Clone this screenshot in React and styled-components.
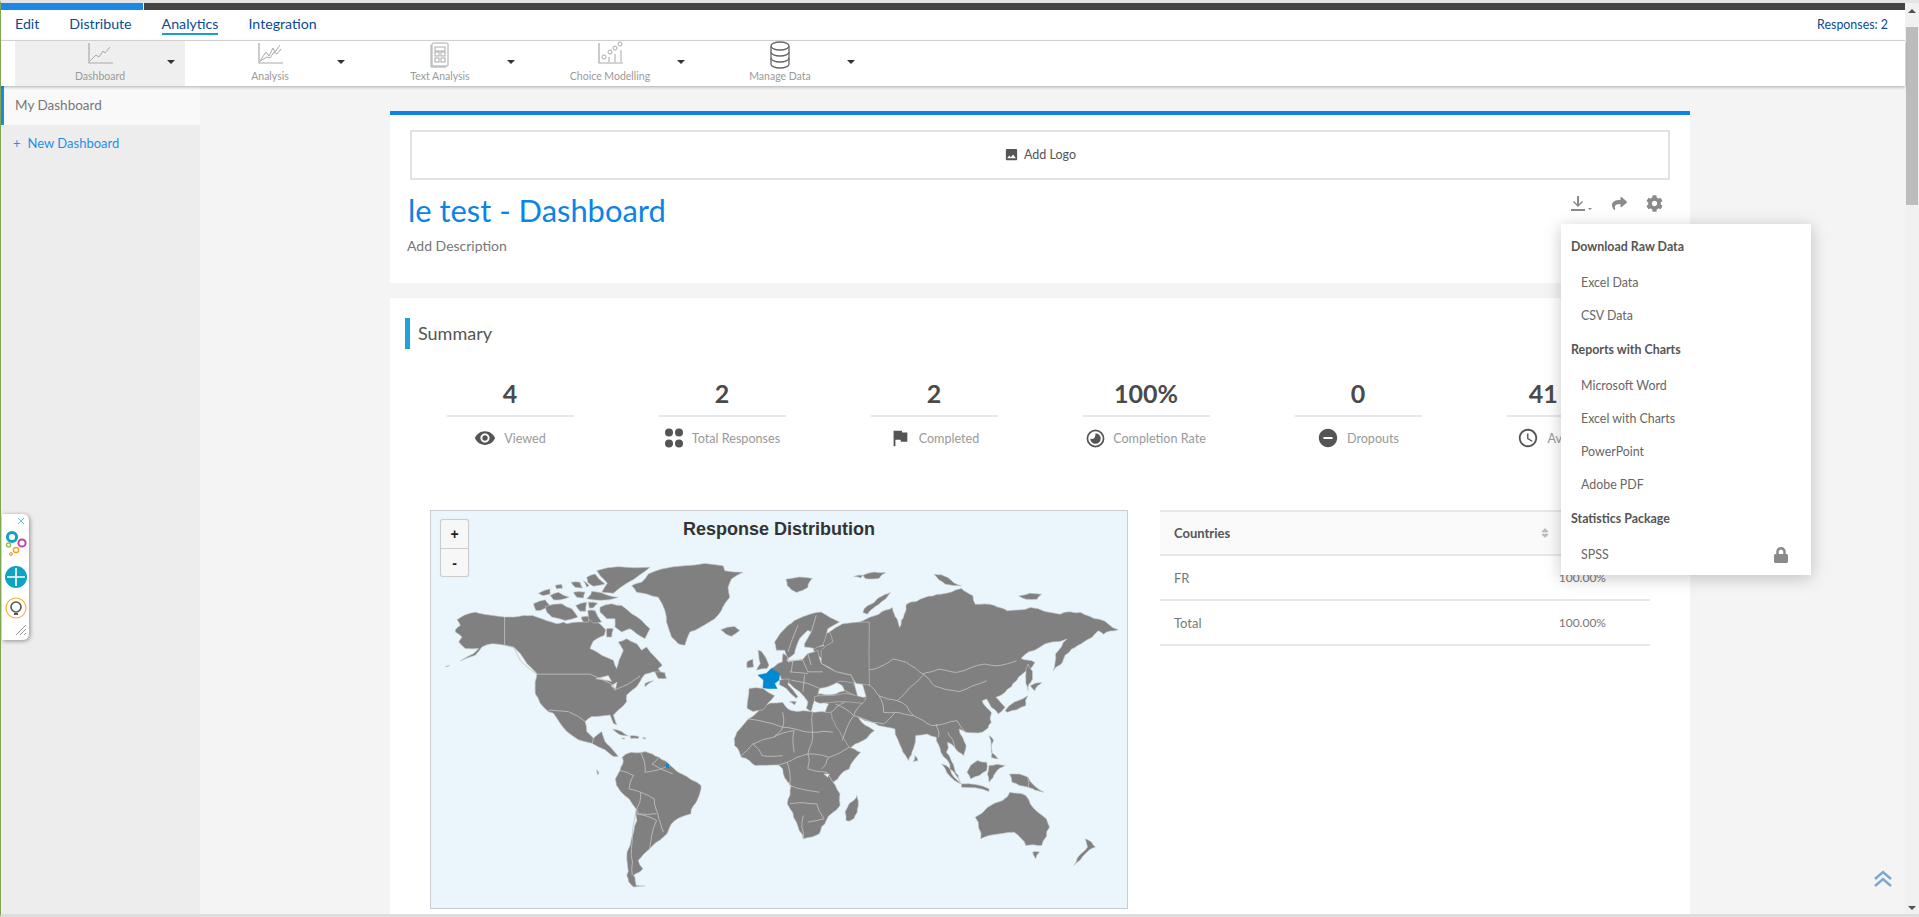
import React from "react";
import styled, { createGlobalStyle } from "styled-components";
import { FaCog, FaShare, FaLock, FaSort } from "react-icons/fa";
import { MdRemoveRedEye, MdFlag, MdRemoveCircle, MdAccessTime, MdImage } from "react-icons/md";

const FONT = `"Lato", "Roboto", "Liberation Sans", sans-serif`;

const Global = createGlobalStyle`
  html, body { margin: 0; padding: 0; height: 100%; overflow: hidden; background: #f4f4f4; }
  body { font-family: ${FONT}; }
  * { box-sizing: border-box; }
`;

const Page = styled.div`
  position: relative; height: 917px; width: 1919px; display: flex; overflow: hidden;
  border-left: 1px solid #7fa653; border-bottom: 3px solid #dedede; border-top: 3px solid #e4e4e4;
`;
const Viewport = styled.div`flex: 1; min-width: 0; display: flex; flex-direction: column;`;
const Scrollbar = styled.div`
  width: 14px; background: #f1f1f1; display: flex; flex-direction: column; align-items: center; flex: none;
`;
const ScrollUp = styled.div`
  margin-top: 6px; width: 0; height: 0; border-left: 4px solid transparent; border-right: 4px solid transparent;
  border-bottom: 4px solid #505050;
`;
const ScrollThumb = styled.div`margin-top: 14px; width: 12px; height: 178px; background: #bcbcbc;`;
const ScrollDown = styled.div`
  margin-top: auto; margin-bottom: 4px; width: 0; height: 0; border-left: 4px solid transparent;
  border-right: 4px solid transparent; border-top: 4px solid #505050;
`;
const ProgressTrack = styled.div`height: 7px; background: #444; flex: none;`;
const ProgressFill = styled.div`height: 100%; width: 143px; background: #1b88e6; border-right: 1px solid #fff;`;

const Nav = styled.nav`
  height: 31px; flex: none; background: #fff; border-bottom: 1px solid #dcdcdc;
  display: flex; align-items: center; padding: 0 17px 1px 14px;
`;
const NavLink = styled.a`
  font-size: 14.2px; color: #0b4a92; margin-right: 30px; line-height: 18px;
  border-bottom: ${(p) => (p.$active ? "2px solid #1a9ad6" : "2px solid transparent")};
`;
const Responses = styled.span`margin-left: auto; font-size: 12.4px; color: #0b4a92;`;

const Toolbar = styled.div`
  height: 45px; flex: none; background: #fff; display: flex; padding-left: 14px;
  box-shadow: 0 1px 3px rgba(0,0,0,.3); position: relative; z-index: 2;
`;
const Tool = styled.div`
  width: 170px; display: grid; background: ${(p) => (p.$active ? "#efefef" : "#fff")};
`;
const ToolBody = styled.div`
  grid-area: 1 / 1; display: flex; flex-direction: column; align-items: center; justify-content: flex-end;
  padding-bottom: 3px; color: #9a9a9a; font-size: 10.5px; line-height: 13px;
`;
const ToolIcon = styled.svg`width: 40px; height: 28px; margin-bottom: 1px; fill: none; stroke: #a9a9a9; stroke-width: 1;`;
const Caret = styled.span`
  grid-area: 1 / 1; justify-self: end; align-self: start; margin: 19px 10px 0 0; width: 0; height: 0;
  border-left: 4px solid transparent; border-right: 4px solid transparent; border-top: 4px solid #333;
`;

const Body = styled.div`flex: 1; display: flex; min-height: 0;`;
const Sidebar = styled.aside`width: 199px; flex: none; background: #ededed;`;
const SideItem = styled.div`
  height: 39px; display: flex; align-items: center; padding: 0 0 2px 11px; background: #f9f9f9;
  border-left: 3px solid #1b88e6; color: #777; font-size: 13.5px;
`;
const SideAdd = styled.div`
  height: 36px; display: flex; align-items: center; padding-left: 12px; gap: 7px; color: #1f8fe8; font-size: 13px;
`;
const Main = styled.main`flex: 1; min-width: 0; padding: 25px 0 0 190px; background: #f4f4f4; overflow: hidden;`;
const HeadCard = styled.section`
  position: relative; width: 1300px; height: 172px; background: #fff; border-top: 4px solid #0b84e6; padding: 15px 20px 0;
`;
const LogoBox = styled.div`
  height: 50px; border: 2px solid #e2e2e2; display: flex; align-items: center; justify-content: center; gap: 5px;
  padding-bottom: 2px; font-size: 12.5px; color: #555;
`;
const TitleRow = styled.div`display: flex; justify-content: space-between; align-items: flex-start; margin-left: -2px;`;
const Title = styled.h1`margin: 13px 0 0; font-size: 30.9px; font-weight: 400; line-height: 36px; color: #0b84e6;`;
const Desc = styled.p`margin: 8px 0 0 -1px; font-size: 14px; line-height: 18px; color: #777;`;
const Actions = styled.div`
  display: flex; align-items: center; gap: 19px; margin: 15px 7px 0 0; color: #8a8a8a;
`;
const DownIcon = styled.svg`width: 22px; height: 16px; fill: #8a8a8a;`;

const Menu = styled.div`
  position: absolute; top: 109px; left: 1171px; width: 250px; height: 351px; background: #fff; z-index: 5;
  padding: 5px 0; box-shadow: 0 3px 16px rgba(0,0,0,.22);
`;
const MenuHead = styled.div`
  height: 34px; margin-bottom: 3px; padding-left: 10px; display: flex; align-items: center;
  font-size: 12.4px; font-weight: 700; color: #555;
`;
const MenuItem = styled.div`
  height: 33px; padding: 0 22px 0 20px; display: flex; align-items: center; justify-content: space-between;
  font-size: 12.4px; color: #666;
`;

const Card = styled.section`
  width: 1300px; height: 640px; margin-top: 15px; background: #fff; padding: 20px 0 0 15px;
`;
const Heading = styled.h2`
  margin: 0; height: 31px; border-left: 5px solid #1fa1dc; padding: 0 0 2px 8px; font-size: 18px; font-weight: 400;
  color: #555; display: flex; align-items: center;
`;
const Stats = styled.div`display: grid; grid-template-columns: repeat(6, 212px); margin: 26px 0 0 -1px;`;
const Stat = styled.div`display: flex; flex-direction: column; align-items: center;`;
const StatValue = styled.div`
  width: 127px; height: 42px; border-bottom: 2px solid #e8e8e8; text-align: center; font-size: 25px; font-weight: 700;
  color: #4a4a4a; line-height: 36px; white-space: nowrap;
`;
const StatLabel = styled.div`
  margin-top: 10px; height: 22px; display: flex; align-items: center; gap: 8px; font-size: 12.6px; color: #999; white-space: nowrap;
  svg { color: #555; flex: none; }
`;
const DataRow = styled.div`display: flex; align-items: flex-start; margin: 61px 0 0 25px; gap: 32px;`;
const MapBox = styled.div`
  position: relative; width: 698px; height: 399px; background: #eaf6fb; border: 1px solid #c6ccd2; flex: none;
`;
const MapSvg = styled.svg`
  display: block; width: 100%; height: 100%;
  .land { fill: #808080; stroke: #c4c4c4; stroke-width: .6; vector-effect: non-scaling-stroke; stroke-linejoin: round; }
  .line { fill: none; stroke: #c4c4c4; stroke-width: .8; vector-effect: non-scaling-stroke; }
  .sea { fill: #eaf6fb; stroke: #c4c4c4; stroke-width: .6; vector-effect: non-scaling-stroke; }
  .hit { fill: #0088d0; stroke: #0088d0; stroke-width: .6; vector-effect: non-scaling-stroke; }
`;
const MapTitle = styled.div`
  position: absolute; top: 8px; left: 0; right: 0; text-align: center; font: 700 18px "Liberation Sans", sans-serif; color: #333;
`;
const ZoomGroup = styled.div`
  position: absolute; top: 8px; left: 9px; width: 29px; border: 1px solid #ccc; border-radius: 3px; background: #f7f7f7;
  box-shadow: 0 0 1px rgba(0,0,0,.15);
`;
const ZoomBtn = styled.div`
  height: 28px; display: flex; align-items: center; justify-content: center; font: 700 14px "Liberation Sans", sans-serif; color: #222;
  & + & { border-top: 1px solid #ccc; }
`;
const Table = styled.div`width: 490px; flex: none; display: grid; grid-template-columns: 392px 98px; font-size: 13px; color: #777;`;
const Th = styled.div`
  height: 46px; background: #fafafa; border-top: 2px solid #e8e8e8; border-bottom: 2px solid #e8e8e8; display: flex; align-items: center;
  justify-content: space-between; padding: 0 0 0 14px; font-weight: 700; color: #555;
  svg { color: #bbb; margin-right: 1px; }
`;
const Td = styled.div`
  height: 45px; border-bottom: 2px solid #e8e8e8; display: flex; align-items: center; padding-left: 14px;
  ${(p) => p.$num && "justify-content: flex-end; padding: 0 44px 0 0; font-size: 12px;"}
`;

const Widget = styled.div`
  position: absolute; left: 1px; top: 511px; width: 27px; height: 126px; background: #fff; border-radius: 0 6px 6px 0;
  box-shadow: 1px 1px 4px rgba(0,0,0,.4);
`;
const ToTop = styled.svg`position: absolute; right: 26px; bottom: 26px; width: 20px; height: 18px; fill: none; stroke: #7aa7cf; stroke-width: 2.4;`;

/* coastlines: adds small deterministic wobble so hand-placed outlines read as a map */
const roughen = (str, amp = 1, rounds = 2, closed = true) => {
  let pts = str.trim().split(/\s+/).map((s) => s.split(",").map(Number));
  let seed = 7;
  const rnd = () => { seed = (seed * 16807) % 2147483647; return seed / 2147483647 - 0.5; };
  for (let r = 0; r < rounds; r++) {
    const out = [];
    pts.forEach((p, i) => {
      out.push(p);
      if (!closed && i === pts.length - 1) return;
      const q = pts[(i + 1) % pts.length];
      const dx = q[0] - p[0], dy = q[1] - p[1], len = Math.hypot(dx, dy);
      if (len > 14) {
        const d = rnd() * Math.min(len * 0.22, 11) * amp;
        out.push([(p[0] + q[0]) / 2 - (dy / len) * d, (p[1] + q[1]) / 2 + (dx / len) * d]);
      }
    });
    pts = out;
  }
  return pts.map((p) => `${p[0].toFixed(1)},${p[1].toFixed(1)}`).join(" ");
};

const polys = [
  // South America
  "440,775 460,760 490,758 520,775 545,800 570,825 612,860 605,900 590,945 555,965 530,1015 500,1050 475,1085 485,1110 465,1130 470,1160 490,1162 465,1165 450,1130 450,1080 465,1000 470,930 435,875 425,840 435,815",
  // Svalbard etc
  "797,240 855,238 845,265 820,280 800,260",
  "945,232 965,228 960,236",
  "965,228 1015,220 1000,238 970,238",
  // Asia / Russia
  "890,400 925,380 965,365 1000,345 1030,325 1040,360 1045,385 1055,345 1060,315 1100,295 1135,285 1180,268 1205,290 1210,315 1250,318 1280,335 1330,325 1395,345 1440,340 1480,360 1522,392 1490,405 1478,395 1445,430 1420,450 1400,490 1380,515 1385,465 1410,420 1350,445 1310,478 1340,490 1330,510 1300,545 1275,580 1255,595 1265,610 1275,625 1260,645 1245,625 1235,600 1225,605 1245,640 1245,670 1225,700 1190,700 1175,690 1190,740 1185,770 1165,745 1150,730 1147,760 1165,810 1178,850 1155,810 1135,760 1125,715 1105,705 1080,710 1075,750 1065,785 1050,750 1035,690 1000,680 985,670 955,655 990,695 965,725 935,750 920,725 895,665 880,645 890,615 875,610 860,605 862,585 905,585 925,575 920,560 895,540 880,545 870,535 900,520 905,505 880,490 868,470 855,445 880,440 870,415",
  // Africa
  "740,625 790,610 810,635 860,640 895,640 905,680 935,745 960,760 935,810 900,850 915,885 915,920 885,965 870,1005 835,1020 820,970 800,915 808,860 790,810 780,798 730,800 700,775 685,740 690,700 715,660",
  "928,965 935,915 952,890 955,920 945,960 935,967",
  // Indonesia etc
  "1137,795 1155,810 1180,855 1165,845",
  "1180,855 1240,870 1240,878 1180,865",
  "1192,820 1215,785 1235,790 1235,815 1200,840",
  "1240,800 1275,800 1255,820 1240,850",
  "1240,710 1250,725 1245,760 1260,780 1245,775",
  "1285,825 1325,835 1360,880 1325,865 1290,850",
  "1275,635 1325,590 1320,620 1280,640",
  "1330,560 1355,550 1340,575",
  "1325,495 1335,540 1325,575 1320,530",
  "1078,770 1085,785 1075,788",
  // Australasia
  "1210,955 1270,905 1285,880 1320,890 1330,915 1365,960 1372,985 1355,1040 1320,1040 1295,1000 1240,1010 1222,1020",
  "1335,1060 1350,1060 1342,1080",
  "1450,1020 1472,1045 1450,1065 1425,1100 1445,1060 1455,1045",
  "965,340 975,320 1000,295 1025,280 1000,315 975,345",
  "1120,225 1150,235 1180,260 1145,255",
  "1305,290 1355,285 1345,300 1320,300",
];

/* North America and Greenland, traced at 3x from the crop at (445,555) */
const america = [
  "30,228 45,215 35,198 60,183 90,175 120,182 178,190 205,190 235,185 262,185 290,195 320,205 335,210 355,205 365,210 400,205 415,205 440,195 455,205 470,215 482,228 478,245 445,262 435,285 470,305 505,320 515,345 522,320 535,290 520,265 545,255 575,270 590,290 605,280 630,310 652,335 640,345 650,360 625,355 600,362 585,385 575,400 545,425 545,445 520,470 505,485 515,515 505,510 495,485 470,488 440,490 420,505 425,535 445,555 470,535 480,565 495,580 520,610 505,610 480,590 440,570 400,560 365,535 345,510 325,480 310,475 285,450 270,420 270,385 275,360 245,330 225,300 205,280 180,275 140,270 110,280 90,305 45,322 85,300 100,285 60,285 40,265 50,250 30,235",
  "560,95 590,85 610,60 650,45 720,35 780,28 835,35 840,50 895,55 860,75 850,100 855,130 840,150 830,170 810,195 750,230 735,235 720,275 700,270 680,250 665,205 660,170 640,130 605,120 575,115",
  "828,228 870,218 885,230 860,248 842,240",
  "455,50 520,38 615,40 585,62 545,88 505,118 470,115 487,88 465,65",
  "425,70 450,60 480,90 445,97 428,85",
  "378,85 405,85 412,102 390,100",
  "415,80 432,95 425,100",
  "330,95 350,92 352,103 335,105",
  "280,118 315,105 315,120 292,125",
  "315,125 340,115 372,130 345,138 325,138",
  "385,115 420,115 415,132 395,130",
  "440,112 490,125 520,130 490,138 445,138 425,135 437,122",
  "430,145 458,148 445,162 433,163",
  "392,155 425,145 422,172 405,172",
  "265,150 300,138 315,155 285,170 272,170",
  "300,158 350,150 380,165 398,190 360,200 320,190 305,175",
  "408,190 435,188 430,205 415,205",
  "428,170 450,170 470,205 445,208 430,195",
  "465,160 500,150 530,155 560,180 590,200 615,225 600,255 575,240 555,225 530,235 510,220 510,195 485,195 465,175",
  "485,225 505,225 500,250 485,250",
  "630,355 660,358 665,375 640,375",
  "600,390 625,382 600,400",
  "503,528 530,535 550,548 525,545",
  "555,548 582,550 580,556 558,556",
  "592,554 603,554 600,558",
  "530,555 540,555 536,558",
  "0,340 12,335 8,339",
  "455,650 462,660 458,665",
];

const lakes = [
  "452,376 490,366 500,384 482,380",
  "498,398 516,386 512,406",
];

const americaLines = [
  "178,190 178,275 205,282 225,320 245,340 275,362",
  "275,362 435,362 465,375 505,395 508,410 550,392 585,368",
  "310,470 370,475 400,490 420,505",
  "445,555 442,570",
];

const europe = [
  "28,240 70,240 105,262 85,285 70,305 40,310 22,300 25,270",
  "55,125 65,128 88,170 82,180 50,185 62,165 58,150",
  "22,160 40,152 42,175 22,178",
  "105,100 145,50 165,35 215,15 245,10 300,40 265,60 250,110 225,120 195,115 195,105 215,70 205,65 180,90 170,115 165,135 145,150 135,125 125,125 110,125",
  "245,125 280,100 270,70 310,45 390,40 390,230 350,225 335,200 290,190 245,165",
  "118,195 95,180 115,165 128,160 130,135 145,145 145,160 190,152 205,135 235,125 245,165 290,190 335,200 345,225 300,218 265,235 240,240 235,262 250,270 225,275 215,310 200,300 205,280 180,250 150,225 125,212",
  "120,215 150,212 145,228 175,265 170,270 140,240 120,230",
  "150,280 170,280 165,290",
  "225,265 250,262 320,255 380,270 370,285 300,280 240,285 225,278",
];

const europeLines = [
  "175,50 155,100 145,130", "215,70 230,20", "140,155 190,155", "160,155 155,190", "190,155 205,190 250,190",
  "205,135 215,170", "150,190 205,195", "155,215 205,225 240,240", "195,200 190,250",
];

const lines = [
  "480,760 490,820 545,800", "520,775 505,795 550,825", "435,815 465,830 455,870 480,880 510,900 520,960 530,1000", "470,930 475,945 515,945",
  "480,880 470,940 460,1050 462,1130", "470,945 515,965 500,1050",
  "715,660 790,685 790,640", "790,685 770,715 725,735 700,770", "790,685 815,690 855,700 855,640", "855,700 900,700", "855,700 845,765 800,790 780,798",
  "845,765 890,775 935,745", "725,735 745,770 790,770", "770,715 815,695 815,760", "800,790 805,860 870,880", "845,765 845,810 885,820 900,850", "805,915 865,915 880,960 845,970", "835,1020 835,950", "890,775 875,810",
  "945,520 990,510 1030,480 1060,490 1095,525 1130,510 1170,520 1230,495 1260,500 1300,485", "1095,525 1120,560 1175,578 1235,545", "945,520 945,560", "975,555 1000,590 1040,605 1095,530",
  "925,575 965,610 945,650 985,670 1010,675 1035,640 1075,650 1115,680 1170,665 1190,700", "1040,605 1060,620 1075,650", "1000,590 1010,640 1035,640", "905,615 945,650 920,725", "895,640 925,610", "1125,675 1130,715", "1150,700 1165,745",
  "1325,835 1325,865",
];

const MapArt = () => (
  <MapSvg viewBox="23 35 1518 1193" preserveAspectRatio="none">
    {polys.map((p, i) => <polygon key={i} className="land" points={roughen(p, 1)} />)}
    <polygon className="sea" points="943,519 956,530 965,560 972,593 955,598 948,565" />
    {lines.map((p, i) => <polyline key={i} className="line" points={roughen(p, 0.6, 2, false)} />)}
    <g transform="matrix(0.7253 0 0 0.9967 54.4 164.5)">
      {america.map((p, i) => <polygon key={i} className="land" points={roughen(p, 0.5, 1)} />)}
      {lakes.map((p, i) => <polygon key={i} className="sea" points={p} />)}
      {americaLines.map((p, i) => <polyline key={i} className="line" points={p} />)}
    </g>
    <g transform="matrix(0.7253 0 0 0.9967 696.3 328.9)">
      {europe.map((p, i) => <polygon key={i} className="land" points={roughen(p, 0.5, 1)} />)}
      {europeLines.map((p, i) => <polyline key={i} className="line" points={p} />)}
      <polygon className="hit" points="55,200 80,195 95,180 120,195 118,215 105,225 112,240 85,240 70,238 72,215" />
    </g>
    <polygon className="hit" points="536,795 542,797 541,807 536,806" />
    <polygon className="sea" points="880,825 892,825 888,835" />
  </MapSvg>
);

const tools = [
  { name: "Dashboard", active: true, icon: <><path d="M9 2v20h24" strokeWidth="1.2"/><path d="M10 20l6-6 3 2 4-6 2 2 5-6"/></> },
  { name: "Analysis", icon: <><path d="M9 2v20h24" strokeWidth="1.2"/><path d="M10 20l6-9 3 4 4-8 2 4 5-7"/><path d="M10 20l7-4 3 1 4-6 3 2 4-5"/></> },
  { name: "Text Analysis", icon: <><rect x="12" y="2" width="16" height="23" rx="1"/><path d="M11 4v22h15"/><rect x="15" y="6" width="10" height="4"/><rect x="15" y="11" width="4" height="4"/><rect x="21" y="11" width="4" height="4"/><rect x="15" y="17" width="4" height="4"/><rect x="21" y="17" width="4" height="4"/></> },
  { name: "Choice Modelling", icon: <><path d="M9 2v20h24" strokeWidth="1.2"/><circle cx="14" cy="16" r="2"/><circle cx="20" cy="11" r="2"/><circle cx="25" cy="7" r="2"/><circle cx="30" cy="3" r="2"/><path d="M19 16v5M25 13v8M31 9v12"/></> },
  { name: "Manage Data", icon: <g stroke="#666" strokeWidth="1.3"><ellipse cx="20" cy="5" rx="9" ry="4"/><path d="M11 5v18c0 2.2 4 4 9 4s9-1.8 9-4V5"/><path d="M11 11c0 2.2 4 4 9 4s9-1.8 9-4M11 17c0 2.2 4 4 9 4s9-1.8 9-4"/></g> },
];

const DotsIcon = () => (
  <svg width="20" height="22" viewBox="0 0 20 22" fill="#555"><circle cx="5" cy="5.5" r="4"/><circle cx="15" cy="5.5" r="4"/><circle cx="5" cy="16.5" r="4"/><circle cx="15" cy="16.5" r="4"/></svg>
);
const RateIcon = () => (
  <svg width="19" height="19" viewBox="0 0 20 20"><circle cx="10" cy="10" r="8.5" fill="none" stroke="#555" strokeWidth="1.8"/><path d="M10 4.5a5.5 5.5 0 1 1-5.5 5.5c2 1 5.5 1 5.5-5.5z" fill="#555"/></svg>
);

const stats = [
  { v: "4", l: "Viewed", i: <MdRemoveRedEye size={22} /> },
  { v: "2", l: "Total Responses", i: <DotsIcon /> },
  { v: "2", l: "Completed", i: <MdFlag size={22} /> },
  { v: "100%", l: "Completion Rate", i: <RateIcon /> },
  { v: "0", l: "Dropouts", i: <MdRemoveCircle size={22} /> },
  { v: "41 secs", l: "Average Time", i: <MdAccessTime size={22} /> },
];

const WidgetArt = () => (
  <svg width="27" height="126" viewBox="0 0 27 126" fill="none">
    <path d="M16 4l6 6M22 4l-6 6" stroke="#5cc4de" strokeWidth="1" />
    <circle cx="10" cy="23" r="4.6" stroke="#12a3c4" strokeWidth="3" />
    <circle cx="20" cy="29" r="3.6" stroke="#c2459c" strokeWidth="2" />
    <circle cx="6.5" cy="31" r="2" stroke="#8cc24a" strokeWidth="1.4" />
    <circle cx="14" cy="36" r="2.6" stroke="#f5a623" strokeWidth="1.5" />
    <circle cx="9" cy="40" r="1.4" stroke="#ef7f45" strokeWidth="1" />
    <circle cx="14" cy="63" r="11" fill="#0fa3c2" />
    <path d="M14 54v18M5 63h18" stroke="#fff" strokeWidth="1.6" />
    <circle cx="14" cy="94" r="10" stroke="#f3b73c" strokeWidth="1.2" fill="#fff" />
    <circle cx="14" cy="93" r="5" stroke="#555" strokeWidth="1.6" />
    <path d="M12 99h4v2h-4z" fill="#555" />
    <path d="M14 121l10-10M18 121l6-6M22 121l2-2" stroke="#999" strokeWidth="1" />
  </svg>
);

export default function App() {
  return (
    <>
      <Global />
      <Page>
        <Viewport>
          <ProgressTrack><ProgressFill /></ProgressTrack>
          <Nav>
            <NavLink>Edit</NavLink>
            <NavLink>Distribute</NavLink>
            <NavLink $active>Analytics</NavLink>
            <NavLink>Integration</NavLink>
            <Responses>Responses: 2</Responses>
          </Nav>
          <Toolbar>
            {tools.map((t) => (
              <Tool key={t.name} $active={t.active}>
                <ToolBody>
                  <ToolIcon viewBox="0 0 40 28">{t.icon}</ToolIcon>
                  {t.name}
                </ToolBody>
                <Caret />
              </Tool>
            ))}
          </Toolbar>
          <Body>
            <Sidebar>
              <SideItem>My Dashboard</SideItem>
              <SideAdd><span>+</span>New Dashboard</SideAdd>
            </Sidebar>
            <Main>
              <HeadCard>
                <LogoBox><MdImage size={15} color="#555" />Add Logo</LogoBox>
                <TitleRow>
                  <div>
                    <Title>le test - Dashboard</Title>
                    <Desc>Add Description</Desc>
                  </div>
                  <Actions>
                    <DownIcon viewBox="0 0 22 16">
                      <path d="M6 0h2v8l3-3 1 1-5 5-5-5 1-1 3 3zM0 13h14v2H0zM17 12h4l-2 2z" />
                    </DownIcon>
                    <FaShare size={15} />
                    <FaCog size={17} />
                  </Actions>
                </TitleRow>
                <Menu>
                  <MenuHead>Download Raw Data</MenuHead>
                  <MenuItem>Excel Data</MenuItem>
                  <MenuItem>CSV Data</MenuItem>
                  <MenuHead>Reports with Charts</MenuHead>
                  <MenuItem>Microsoft Word</MenuItem>
                  <MenuItem>Excel with Charts</MenuItem>
                  <MenuItem>PowerPoint</MenuItem>
                  <MenuItem>Adobe PDF</MenuItem>
                  <MenuHead>Statistics Package</MenuHead>
                  <MenuItem>SPSS<FaLock size={16} color="#8a8a8a" /></MenuItem>
                </Menu>
              </HeadCard>
              <Card>
                <Heading>Summary</Heading>
                <Stats>
                  {stats.map((s) => (
                    <Stat key={s.l}>
                      <StatValue>{s.v}</StatValue>
                      <StatLabel>{s.i}{s.l}</StatLabel>
                    </Stat>
                  ))}
                </Stats>
                <DataRow>
                  <MapBox>
                    <MapArt />
                    <MapTitle>Response Distribution</MapTitle>
                    <ZoomGroup><ZoomBtn>+</ZoomBtn><ZoomBtn>-</ZoomBtn></ZoomGroup>
                  </MapBox>
                  <Table>
                    <Th>Countries<FaSort size={12} /></Th><Th />
                    <Td>FR</Td><Td $num>100.00%</Td>
                    <Td>Total</Td><Td $num>100.00%</Td>
                  </Table>
                </DataRow>
              </Card>
            </Main>
          </Body>
        </Viewport>
        <Scrollbar>
          <ScrollUp /><ScrollThumb /><ScrollDown />
        </Scrollbar>
        <Widget><WidgetArt /></Widget>
        <ToTop viewBox="0 0 20 18"><path d="M2 9l8-7 8 7M2 16l8-7 8 7" /></ToTop>
      </Page>
    </>
  );
}
